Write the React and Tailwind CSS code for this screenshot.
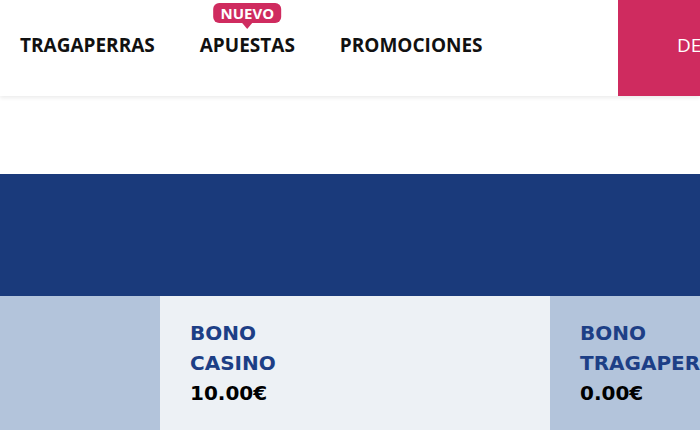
import React from 'react';

const navItems = ['TRAGAPERRAS', 'APUESTAS', 'PROMOCIONES'];

const BonusCard = ({ title, amount, className }) => (
    <div className={`shrink-0 h-[134px] pl-[30px] pt-[22px] ${className}`}>
        <div className="text-[20px] leading-[30px] font-bold text-[#1d3f86] whitespace-nowrap" style={{ fontFamily: '"DejaVu Sans", sans-serif' }}>
            BONO
            <br />
            {title}
        </div>
        <div className="text-[20px] leading-[30px] font-bold text-black" style={{ fontFamily: '"DejaVu Sans", sans-serif' }}>
            {amount}
        </div>
    </div>
);

const App = () => {
    return (
        <div className="w-[700px] h-[441px] overflow-hidden bg-white font-['Open_Sans',sans-serif]">
            <header className="relative z-10 flex h-[96px] bg-white shadow-[0_2px_4px_rgba(0,0,0,0.08)]">
                <nav className="flex flex-1 items-center gap-[45px] pl-[20px] pb-[5px]">
                    {navItems.map(item => (
                        <div key={item} className="relative">
                            {item === 'APUESTAS' && (
                                <div className="absolute left-1/2 -translate-x-1/2 -top-[28px] flex flex-col items-center">
                                    <span className="rounded-[6px] bg-[#cf2b5f] px-[7px] h-[20px] flex items-center text-[15px] font-bold text-white leading-none">
                                        NUEVO
                                    </span>
                                    <span className="w-0 h-0 border-l-[5px] border-r-[5px] border-t-[6px] border-l-transparent border-r-transparent border-t-[#cf2b5f]"></span>
                                </div>
                            )}
                            <span className="text-[19px] font-bold text-[#111]">{item}</span>
                        </div>
                    ))}
                </nav>
                <button className="w-[82px] shrink-0 bg-[#cf2b5f] text-white text-[19px] text-left pl-[59px] pb-[5px] overflow-hidden whitespace-nowrap">
                    DEPOSITAR
                </button>
            </header>

            <div className="h-[78px] bg-white"></div>

            <div className="h-[122px] bg-[#1a3a7b]"></div>

            <div className="flex">
                <div className="w-[160px] shrink-0 h-[134px] bg-[#b3c4db]"></div>
                <BonusCard title="CASINO" amount="10.00€" className="w-[390px] bg-[#edf1f5]" />
                <BonusCard title="TRAGAPERRAS" amount="0.00€" className="w-[390px] bg-[#b3c4db]" />
            </div>
        </div>
    );
};

export default App;
